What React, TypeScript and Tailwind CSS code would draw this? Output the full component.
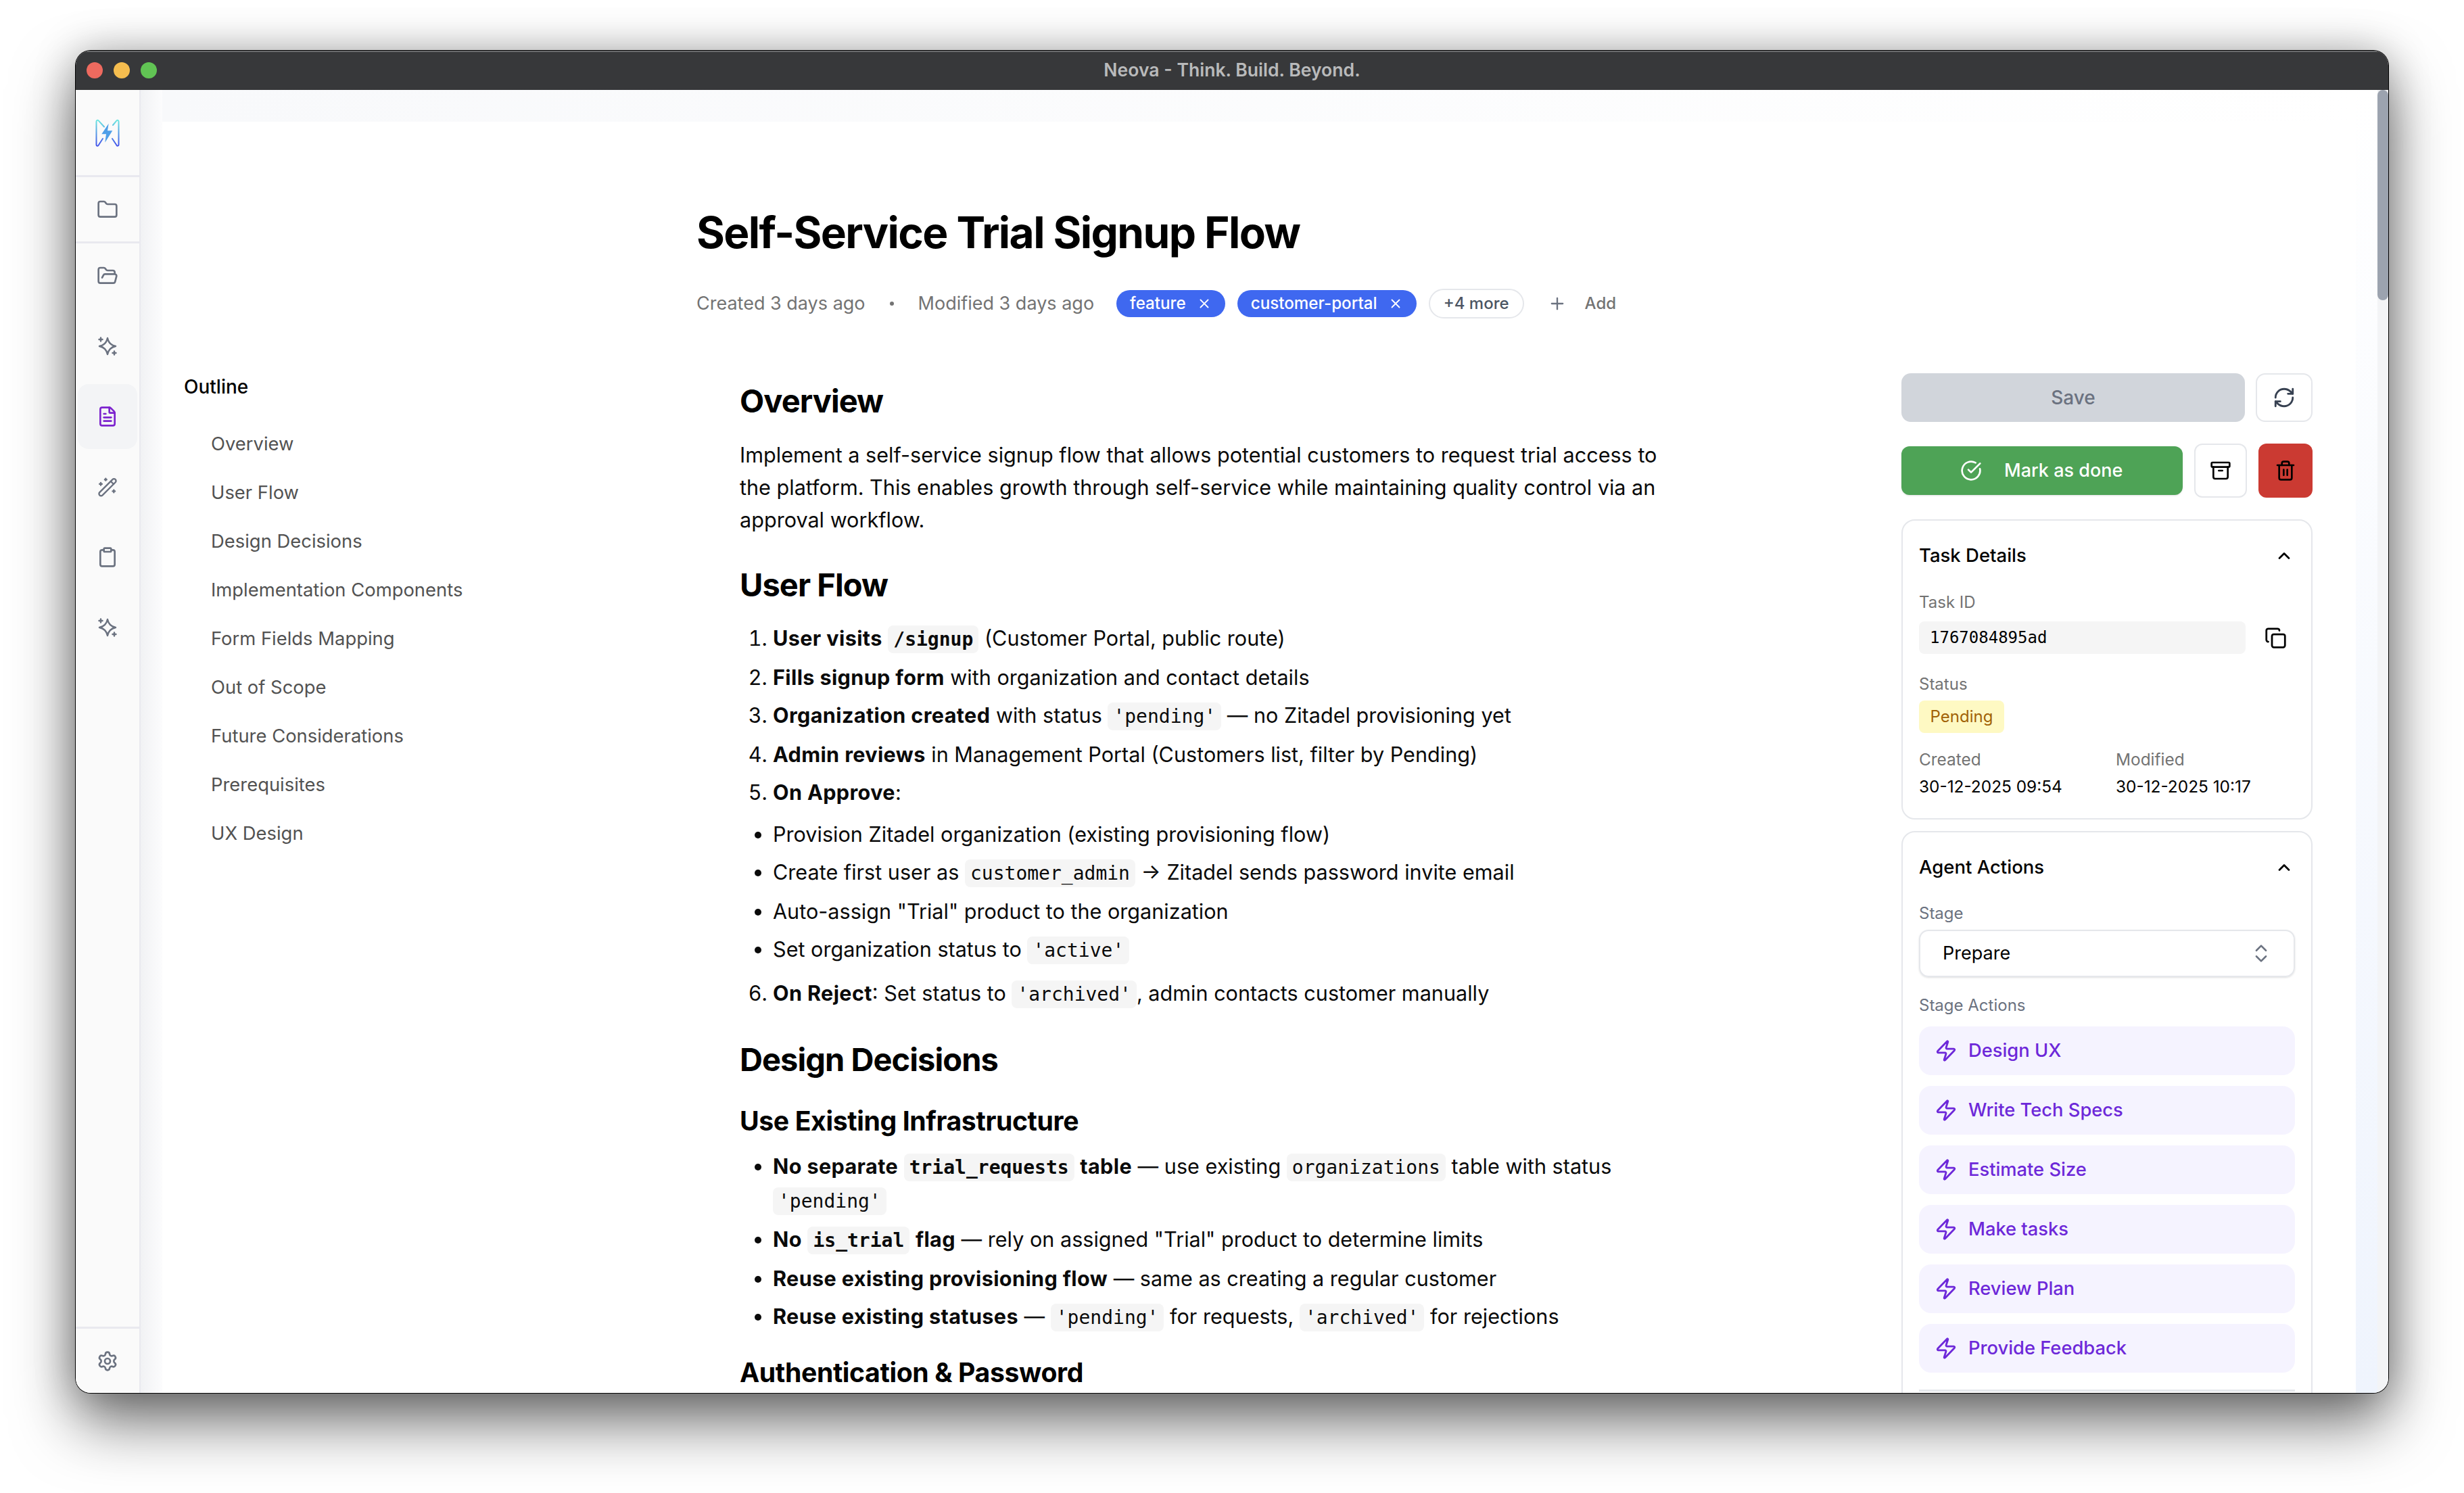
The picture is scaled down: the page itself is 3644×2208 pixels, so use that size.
import type { ReactNode } from "react";
import {
  Archive,
  ChevronUp,
  ChevronsUpDown,
  CircleCheckBig,
  Clipboard,
  Copy,
  FileText,
  Folder,
  FolderOpen,
  Plus,
  RefreshCw,
  Settings,
  Trash2,
  X,
  Zap,
} from "lucide-react";

const OUTLINE = [
  "Overview",
  "User Flow",
  "Design Decisions",
  "Implementation Components",
  "Form Fields Mapping",
  "Out of Scope",
  "Future Considerations",
  "Prerequisites",
  "UX Design",
];

const STAGE_ACTIONS = ["Design UX", "Write Tech Specs", "Estimate Size", "Make tasks", "Review Plan", "Provide Feedback"];

function SparkleIcon() {
  return (
    <svg width="30" height="30" viewBox="0 0 30 30" fill="none" stroke="#6b7280" strokeWidth="2.4" strokeLinecap="round" strokeLinejoin="round">
      <path d="M15 3Q17 13 27 15 17 17 15 27 13 17 3 15 13 13 15 3z" />
      <path d="M5 2.500v5M2.500 5h5M25 22.500v5M22.500 25h5" />
    </svg>
  );
}

function WandIcon() {
  return (
    <svg width="30" height="30" viewBox="0 0 30 30" fill="none" stroke="#6b7280" strokeWidth="2.4" strokeLinecap="round" strokeLinejoin="round">
      <rect x="-1.500" y="12.700" width="33" height="6" rx="3" transform="rotate(-45 15 15.700)" />
      <path d="M20 7l4 4" />
      <path d="M12.300 2.800v2.800M10.900 4.200h2.800M5 9v3.600M3.200 10.800h3.600M24.300 19.600v3.600M22.500 21.400h3.600" />
    </svg>
  );
}

function NeovaLogo() {
  return (
    <svg width="36" height="41" viewBox="0 0 36 41" fill="none">
      <defs>
        <linearGradient id="neova-stroke" x1="0" y1="0" x2="0" y2="1">
          <stop offset="0" stopColor="#6ee7e0" />
          <stop offset="1" stopColor="#4353ea" />
        </linearGradient>
      </defs>
      <path
        d="M11 29 4.500 39c-1 1.300-3 .9-3-1V4c0-2 1.800-3 3.200-1.600L13 11.500M25 29l6.500 9.800c1 1.400 3 1 3-.800V4c0-2-1.800-3-3-1.600L26 9"
        stroke="url(#neova-stroke)"
        strokeWidth="2"
        strokeLinecap="round"
      />
      <path d="M19.700 6.700 9.300 22.300H16L14.300 34.700 25.300 17.300H18z" fill="#4f9fe8" />
    </svg>
  );
}

function Code({ children, bold }: { children: ReactNode; bold?: boolean }) {
  return (
    <code className={`rounded-[8px] bg-[#f5f5f5] px-[8px] py-[4px] font-['DejaVu_Sans_Mono',monospace] text-[28px] ${bold ? "font-bold" : "font-normal"}`}>
      {children}
    </code>
  );
}

function B({ children }: { children: ReactNode }) {
  return <strong className="font-bold tracking-[0.012em]">{children}</strong>;
}

function Sidebar() {
  const item = "flex h-[96px] items-center justify-center";
  return (
    <aside className="flex w-[96px] shrink-0 flex-col border-r-2 border-[#e9e9ef] bg-[#fafafa]">
      <div className="flex h-[129px] items-center justify-center border-b-[3px] border-[#e9e9ef]">
        <NeovaLogo />
      </div>
      <div className="flex h-[98px] items-center justify-center border-b-[3px] border-[#e9e9ef]">
        <Folder size={32} strokeWidth={2} className="text-[#6b7280]" />
      </div>
      <div className="flex flex-1 flex-col gap-2">
        <div className={item}>
          <FolderOpen size={32} strokeWidth={2} className="text-[#6b7280]" />
        </div>
        <div className={item}>
          <SparkleIcon />
        </div>
        <div className={`${item} mx-[3px] rounded-[16px] bg-[#f3f4f6]`}>
          <FileText size={32} strokeWidth={2} className="text-[#7c22ce]" />
        </div>
        <div className={item}>
          <WandIcon />
        </div>
        <div className={item}>
          <Clipboard size={32} strokeWidth={2} className="text-[#6b7280]" />
        </div>
        <div className={item}>
          <SparkleIcon />
        </div>
      </div>
      <div className="flex h-[98px] items-center justify-center border-t-[3px] border-[#e9e9ef]">
        <Settings size={32} strokeWidth={2} className="text-[#6b7280]" />
      </div>
    </aside>
  );
}

function Outline() {
  return (
    <nav className="w-[790px] shrink-0 pl-[32px] pt-[372px]">
      <div className="mb-[29px] text-[28px] leading-[40px] font-medium text-black">Outline</div>
      {OUTLINE.map((title) => (
        <div key={title} className="flex h-[72px] items-center pl-[40px] text-[27.4px] text-[#525252]">
          {title}
        </div>
      ))}
    </nav>
  );
}

function Tag({ label }: { label: string }) {
  return (
    <span className="flex h-[40px] items-center justify-between gap-[16px] rounded-full bg-[#3f68f0] px-[20px] text-[24.2px] font-medium text-white">
      {label}
      <X size={22} strokeWidth={2} />
    </span>
  );
}

function Document() {
  return (
    <main className="w-[1782px] shrink-0 pt-[128px] text-[30.6px] leading-[48px] text-[#0a0a0a]">
      <h1 className="text-[64px] leading-[72px] font-bold tracking-[-0.025em] text-black">Self-Service Trial Signup Flow</h1>
      <div className="mt-[47px] flex h-[44px] items-center text-[27px] text-[#737373]">
        <span>Created 3 days ago</span>
        <span className="mx-[36px] h-[6px] w-[6px] rounded-full bg-[#737373]" />
        <span>Modified 3 days ago</span>
        <div className="ml-[33px] flex items-center gap-[18px]">
          <Tag label="feature" />
          <Tag label="customer-portal" />
          <span className="flex h-[44px] items-center rounded-full border-2 border-[#e5e7eb] px-[20px] text-[24px] font-medium text-[#4b5563]">+4 more</span>
        </div>
        <Plus size={28} strokeWidth={2} className="ml-[35px] text-[#6b7280]" />
        <span className="ml-[27px] text-[24px] font-medium">Add</span>
      </div>

      <article className="w-[1440px] pl-[64px] pt-[92px]">
        <h2 className="text-[47px] leading-[60px] font-bold tracking-[-0.02em] text-black">Overview</h2>
        <p className="mt-[26px]">
          Implement a self-service signup flow that allows potential customers to request trial access to the platform. This enables growth through self-service while maintaining quality control via an approval workflow.
        </p>

        <h2 className="mt-[42px] text-[47px] leading-[60px] font-bold tracking-[-0.02em] text-black">User Flow</h2>
        <ol className="mt-[25px] list-decimal pl-[49px] [&>li]:mb-[8px]">
          <li>
            <B>User visits</B> <Code bold>/signup</Code> (Customer Portal, public route)
          </li>
          <li>
            <B>Fills signup form</B> with organization and contact details
          </li>
          <li>
            <B>Organization created</B> with status <Code>'pending'</Code> — no Zitadel provisioning yet
          </li>
          <li>
            <B>Admin reviews</B> in Management Portal (Customers list, filter by Pending)
          </li>
          <li>
            <B>On Approve</B>:
          </li>
        </ol>
        <ul className="mt-[14px] list-disc pl-[49px] [&>li]:mb-[8px]">
          <li>Provision Zitadel organization (existing provisioning flow)</li>
          <li>
            Create first user as <Code>customer_admin</Code> → Zitadel sends password invite email
          </li>
          <li>Auto-assign "Trial" product to the organization</li>
          <li>
            Set organization status to <Code>'active'</Code>
          </li>
        </ul>
        <ol start={6} className="mt-[15px] list-decimal pl-[49px]">
          <li>
            <B>On Reject</B>: Set status to <Code>'archived'</Code>, admin contacts customer manually
          </li>
        </ol>

        <h2 className="mt-[42px] text-[47px] leading-[60px] font-bold tracking-[-0.02em] text-black">Design Decisions</h2>
        <h3 className="mt-[36px] text-[39.200px] leading-[50px] font-bold tracking-[-0.01em] text-black">Use Existing Infrastructure</h3>
        <ul className="mt-[18px] list-disc pl-[49px] [&>li]:mb-[8px]">
          <li>
            <B>No separate</B> <Code bold>trial_requests</Code> <B>table</B> — use existing <Code>organizations</Code> table with status <Code>'pending'</Code>
          </li>
          <li>
            <B>No</B> <Code bold>is_trial</Code> <B>flag</B> — rely on assigned "Trial" product to determine limits
          </li>
          <li>
            <B>Reuse existing provisioning flow</B> — same as creating a regular customer
          </li>
          <li>
            <B>Reuse existing statuses</B> — <Code>'pending'</Code> for requests, <Code>'archived'</Code> for rejections
          </li>
        </ul>
        <h3 className="mt-[32px] text-[39.200px] leading-[50px] font-bold tracking-[-0.01em] text-black">Authentication &amp; Password</h3>
      </article>
    </main>
  );
}

function CardHeader({ title }: { title: string }) {
  return (
    <div className="flex items-center justify-between pr-[2px] text-[27.5px] font-medium text-black">
      {title}
      <ChevronUp size={28} strokeWidth={2.4} />
    </div>
  );
}

function RightPanel() {
  return (
    <section className="w-[608px] shrink-0 pt-[372px]">
      <div className="flex gap-4">
        <button className="h-[72px] flex-1 rounded-[14px] bg-[#d1d5db] text-[28px] font-medium text-[#6b7280]">Save</button>
        <button className="flex h-[72px] w-[84px] items-center justify-center rounded-[14px] border-2 border-[#e5e7eb] text-[#374151]">
          <RefreshCw size={34} strokeWidth={2} />
        </button>
      </div>
      <div className="mt-[32px] flex items-center">
        <button className="flex h-[72px] w-[416px] items-center gap-[33px] rounded-[12px] bg-[#4ea356] pl-[87px] text-[27px] font-medium text-white shadow-sm">
          <CircleCheckBig size={32} strokeWidth={2} />
          Mark as done
        </button>
        <button className="ml-[17px] flex h-[80px] w-[78px] items-center justify-center rounded-[12px] border-2 border-[#e5e7eb]">
          <Archive size={32} strokeWidth={2} className="text-black" />
        </button>
        <button className="ml-[17px] flex h-[80px] w-[80px] items-center justify-center rounded-[12px] bg-[#cb3a32]">
          <Trash2 size={32} strokeWidth={2} className="text-black" />
        </button>
      </div>

      <div className="mt-[32px] h-[444px] rounded-[20px] border-2 border-[#e5e7eb] px-[24px] pt-[31px]">
        <CardHeader title="Task Details" />
        <div className="mt-[33px] text-[24px] leading-[32px] text-[#737373]">Task ID</div>
        <div className="mt-[12px] flex items-center">
          <div className="flex h-[48px] w-[483px] items-center rounded-[8px] bg-[#f5f5f5] px-[16px] font-['DejaVu_Sans_Mono',monospace] text-[24px] text-black">1767084895ad</div>
          <Copy size={33} strokeWidth={2} className="ml-[28px] text-black" />
        </div>
        <div className="mt-[29px] text-[24px] leading-[32px] text-[#737373]">Status</div>
        <div className="mt-[8px] flex h-[48px] w-[126px] items-center justify-center rounded-[8px] bg-[#fef9c3] text-[24px] text-[#a16207]">Pending</div>
        <div className="mt-[23px] flex text-[24.4px] leading-[32px]">
          <div className="w-[291px]">
            <div className="text-[#737373]">Created</div>
            <div className="mt-[8px] text-black">30-12-2025 09:54</div>
          </div>
          <div>
            <div className="text-[#737373]">Modified</div>
            <div className="mt-[8px] text-black">30-12-2025 10:17</div>
          </div>
        </div>
      </div>

      <div className="mt-[17px] rounded-[20px] border-2 border-[#e5e7eb] px-[24px] pb-[40px] pt-[31px]">
        <CardHeader title="Agent Actions" />
        <div className="mt-[32px] text-[24px] leading-[32px] text-[#6b7280]">Stage</div>
        <div className="mt-[8px] flex h-[70px] items-center justify-between rounded-[14px] border-2 border-[#e5e7eb] pl-[33px] pr-[31px] text-[27px] text-black shadow-sm">
          Prepare
          <ChevronsUpDown size={34} strokeWidth={1.8} className="text-[#6b7280]" />
        </div>
        <div className="mt-[26px] text-[24px] leading-[32px] text-[#6b7280]">Stage Actions</div>
        <div className="mt-[15px] flex flex-col gap-4">
          {STAGE_ACTIONS.map((action) => (
            <div key={action} className="flex h-[72px] items-center gap-[16px] rounded-[18px] bg-[#f5f3ff] pl-[23px] text-[27.3px] font-medium text-[#6d28d9]">
              <Zap size={34} strokeWidth={2} />
              {action}
            </div>
          ))}
        </div>
        <div className="mt-[25px] h-[3px] bg-[#e5e7eb]" />
      </div>
    </section>
  );
}

export default function App() {
  return (
    <div className="h-[2208px] w-[3644px] overflow-hidden bg-white pl-[112px] pt-[75px] font-['Inter',sans-serif]">
      <div className="flex h-[1985px] w-[3420px] flex-col overflow-hidden rounded-[22px] bg-white shadow-[0_0_0_1px_#000,0_44px_90px_rgba(0,0,0,0.55),0_0_60px_rgba(0,0,0,0.25)]">
        <header className="relative flex h-[58px] shrink-0 items-center justify-center border-t-2 border-[#6a6b6d] bg-[#37383a] pb-[3px] text-[26.6px] font-semibold text-[#b9babb]">
          <div className="absolute left-[16px] top-[15px] flex gap-4">
            <span className="h-[24px] w-[24px] rounded-full bg-[#ee6a5f]" />
            <span className="h-[24px] w-[24px] rounded-full bg-[#f5bd4f]" />
            <span className="h-[24px] w-[24px] rounded-full bg-[#61c454]" />
          </div>
          Neova - Think. Build. Beyond.
        </header>
        <div className="flex min-h-0 flex-1">
          <Sidebar />
          <div className="w-[32px] shrink-0 bg-gradient-to-r from-[#f1f2f4] to-[#fcfcfd]" />
          <div className="flex min-w-0 flex-1 flex-col">
            <div className="h-[47px] shrink-0 bg-gradient-to-r from-[#f8f9fb] to-white" />
            <div className="flex min-h-0 flex-1 overflow-hidden bg-white">
              <Outline />
              <Document />
              <RightPanel />
            </div>
          </div>
          <div className="w-[32px] shrink-0 bg-gradient-to-b from-white to-[#eff4fd]" />
          <div className="w-[16px] shrink-0 bg-[#f3f4f6]">
            <div className="h-[311px] rounded-full bg-[#9ca3af]" />
          </div>
        </div>
      </div>
    </div>
  );
}
